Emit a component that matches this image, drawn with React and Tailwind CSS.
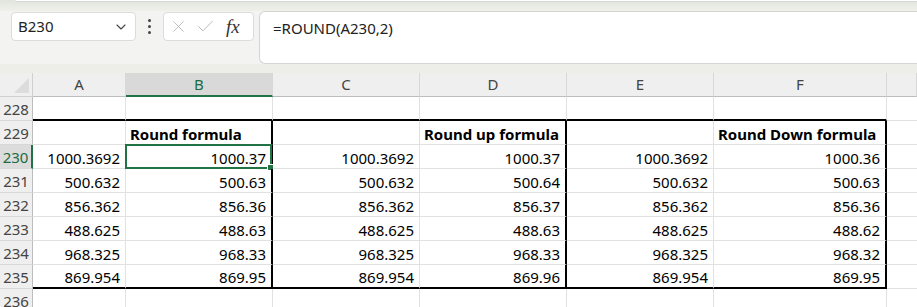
import { ChevronDown, X, Check } from "lucide-react";

const cols = ["A", "B", "C", "D", "E", "F", ""];

const rows = [
  { n: 228, cells: ["", "", "", "", "", ""] },
  { n: 229, cells: ["", "Round formula", "", "Round up formula", "", "Round Down formula"], bold: true },
  { n: 230, cells: ["1000.3692", "1000.37", "1000.3692", "1000.37", "1000.3692", "1000.36"] },
  { n: 231, cells: ["500.632", "500.63", "500.632", "500.64", "500.632", "500.63"] },
  { n: 232, cells: ["856.362", "856.36", "856.362", "856.37", "856.362", "856.36"] },
  { n: 233, cells: ["488.625", "488.63", "488.625", "488.63", "488.625", "488.62"] },
  { n: 234, cells: ["968.325", "968.33", "968.325", "968.33", "968.325", "968.32"] },
  { n: 235, cells: ["869.954", "869.95", "869.954", "869.96", "869.954", "869.95"] },
  { n: 236, cells: ["", "", "", "", "", ""] },
];

function Cell({ value, row, col, bold }) {
  const inTable = row >= 229 && row <= 235;
  const topEdge = row === 228 && col < 6;
  const bottomEdge = row === 235 && col < 6;
  const rightEdge = inTable && (col === 1 || col === 3 || col === 5);
  const selected = row === 230 && col === 1;

  return (
    <div
      className={[
        "relative flex items-center h-[24px] px-[5px] text-[15px] text-black whitespace-nowrap",
        bold ? "font-bold justify-start pl-[4px]" : "justify-end",
        topEdge || bottomEdge ? "border-b-2 border-b-black" : "border-b border-b-[#e1e1e1]",
        rightEdge ? "border-r-2 border-r-black" : "border-r border-r-[#e1e1e1]",
      ].join(" ")}
    >
      <span className="leading-none pt-[3px]">{value}</span>
      {selected && (
        <div className="absolute -left-[1px] -top-[1px] -right-[1px] -bottom-[1px] border-2 border-[#217346]">
          <div className="absolute -right-[4px] -bottom-[4px] w-[7px] h-[7px] bg-[#217346] border border-white" />
        </div>
      )}
    </div>
  );
}

export default function App() {
  return (
    <div className="w-[917px] h-[307px] overflow-hidden bg-white" style={{ fontFamily: '"Noto Sans", "Open Sans", sans-serif' }}>
      {/* Formula bar area */}
      <div className="bg-[#f3f3f1] h-[73px] flex flex-col">
        <div className="h-[11px] bg-gradient-to-b from-[#e2e5dc] to-[#eef0ea]">
          <div className="ml-[15px] h-[2px] bg-white border-b border-[#d6d6d6] rounded-bl" />
        </div>
        <div className="flex items-start">
          <div className="ml-[11px] mt-[1px] w-[125px] h-[29px] bg-white border border-[#dcdcdc] rounded-[4px] flex items-center justify-between pl-[6px] pr-[6px]">
            <span className="text-[15px] text-[#222]">B230</span>
            <ChevronDown size={16} strokeWidth={1.6} className="text-[#444]" />
          </div>
          <div className="w-[27px] h-[30px] flex flex-col items-center justify-center gap-[3px]">
            <span className="w-[3px] h-[3px] bg-[#444] rounded-full" />
            <span className="w-[3px] h-[3px] bg-[#444] rounded-full" />
            <span className="w-[3px] h-[3px] bg-[#444] rounded-full" />
          </div>
          <div className="mt-[1px] w-[91px] h-[29px] bg-white border border-[#dcdcdc] rounded-[4px] flex items-center pl-[5px] gap-[7px]">
            <X size={19} strokeWidth={1.1} className="text-[#b8b8b8]" />
            <Check size={21} strokeWidth={1.1} className="text-[#b8b8b8]" />
            <span
              className="text-[19px] italic text-[#333] leading-none ml-[3px]"
              style={{ fontFamily: '"Liberation Serif", serif' }}
            >
              fx
            </span>
          </div>
          <div className="ml-[5px] flex-1 h-[53px] bg-white border border-r-0 border-[#d4d4d4] rounded-l-[6px] pl-[13px] pt-[4px]">
            <span className="text-[15px] text-[#222]">=ROUND(A230,2)</span>
          </div>
        </div>
        <div className="flex-1 bg-[#eceee7]" />
      </div>

      {/* Grid */}
      <div className="grid grid-cols-[33px_93px_147px_147px_147px_147px_173px_1fr]">
        {/* header row */}
        <div className="h-[24px] bg-[#efefef] border-r border-b border-[#d0d0d0] relative">
          <div
            className="absolute right-[3px] bottom-[3px] w-[15px] h-[15px] bg-[#dcdcdc]"
            style={{ clipPath: "polygon(100% 0, 100% 100%, 0 100%)" }}
          />
        </div>
        {cols.map((c, i) => (
          <div
            key={i}
            className={[
              "h-[24px] flex items-center justify-center text-[15px] border-r border-r-[#d8d8d8]",
              i === 1
                ? "bg-[#d9d9d9] text-[#1e6b41] border-b-2 border-b-[#217346]"
                : "bg-[#efefef] text-[#444] border-b border-b-[#bdbdbd]",
            ].join(" ")}
          >
            {c}
          </div>
        ))}

        {rows.map((r) => (
          <Row key={r.n} r={r} />
        ))}
      </div>
    </div>
  );
}

function Row({ r }) {
  const active = r.n === 230;
  return (
    <>
      <div
        className={[
          "h-[24px] flex items-center justify-center text-[15px] border-b border-b-[#d8d8d8]",
          active
            ? "bg-[#dcdcdc] text-[#1e6b41] border-r-2 border-r-[#217346]"
            : "bg-[#efefef] text-[#444] border-r border-r-[#bdbdbd]",
        ].join(" ")}
      >
        <span className="pt-[2px]">{r.n}</span>
      </div>
      {r.cells.map((v, i) => (
        <Cell key={i} value={v} row={r.n} col={i} bold={r.bold} />
      ))}
      <div className="h-[24px] border-b border-b-[#e1e1e1]" />
    </>
  );
}
